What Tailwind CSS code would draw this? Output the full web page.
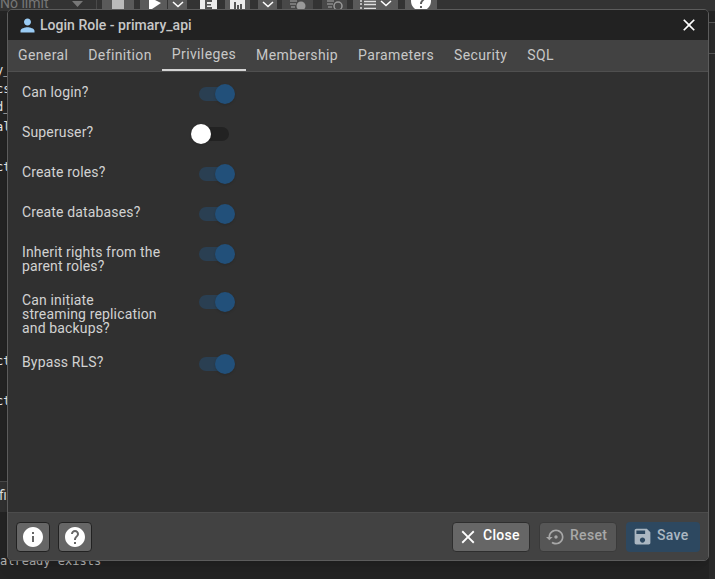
<!DOCTYPE html>
<html>
<head>
<meta charset="utf-8">
<script src="https://cdn.jsdelivr.net/npm/@tailwindcss/browser@4"></script>
<title>Login Role</title>
</head>
<body class="m-0 bg-[#222222]">
<div class="relative w-[715px] h-[579px] overflow-hidden bg-[#232323] font-['Roboto',sans-serif]">
  <!-- background application, dimmed behind the dialog -->
  <div class="flex h-[11px] bg-[#333333] overflow-hidden">
    <div class="w-[97px] flex border-r border-[#4a4a4a]">
      <span class="w-[72px] text-[14px] leading-[10px] -mt-[2px] text-[#777777]">No limit</span>
      <svg class="mt-[1px]" width="11" height="6" viewBox="0 0 11 6"><path d="M0 0H11L5.500 6Z" fill="#777777"/></svg>
    </div>
    <span class="w-[5px]"></span>
    <div class="w-[32px] h-full bg-[#5a5a5a] flex justify-center"><span class="w-[12px] h-full bg-[#bbbbbb]"></span></div>
    <div class="ml-[6px] w-[27px] h-full bg-[#5a5a5a] flex justify-center"><svg width="16" height="11" viewBox="0 0 16 11"><path d="M3 -3L15 3L3 11Z" fill="#ffffff"/></svg></div>
    <div class="ml-px w-[19px] h-full bg-[#5a5a5a] flex justify-center"><svg width="12" height="11" viewBox="0 0 12 11"><path d="M1 2L6 6.500L11 2" fill="none" stroke="#fff" stroke-width="1.500"/></svg></div>
    <div class="ml-[13px] w-[17px] h-full bg-[#ececec] flex justify-center"><svg width="9" height="11" viewBox="0 0 9 11"><path d="M1 0H8V2H3V4H7V5.500H3V7H8V9H1Z" fill="#555"/></svg></div>
    <div class="ml-[8px] w-[25px] h-full bg-[#5a5a5a] flex justify-center"><span class="w-[15px] h-full bg-[#ececec] flex items-end justify-center gap-px pb-[2px]"><i class="w-[2px] h-[7px] bg-[#555]"></i><i class="w-[2px] h-[4px] bg-[#555]"></i><i class="w-[2px] h-[5px] bg-[#555]"></i></span></div>
    <div class="ml-[8px] w-[19px] h-full bg-[#5a5a5a] flex justify-center"><svg width="12" height="11" viewBox="0 0 12 11"><path d="M1 2L6 6.500L11 2" fill="none" stroke="#fff" stroke-width="1.500"/></svg></div>
    <div class="ml-[5px] w-[31px] h-full bg-[#484848] flex justify-center"><svg width="18" height="11" viewBox="0 0 18 11"><circle cx="12" cy="6" r="4.500" fill="#999"/><path d="M1 1H8M1 4H7M2 7H6" stroke="#888" stroke-width="1.500"/></svg></div>
    <div class="ml-[9px] w-[25px] h-full bg-[#484848] flex justify-center"><svg width="18" height="11" viewBox="0 0 18 11"><circle cx="12" cy="6" r="4" fill="none" stroke="#999" stroke-width="1.500"/><path d="M1 1H8M1 4H7M2 7H6" stroke="#888" stroke-width="1.500"/></svg></div>
    <div class="ml-[6px] w-[45px] h-full bg-[#5a5a5a] flex justify-center gap-1"><svg width="16" height="11" viewBox="0 0 16 11"><path d="M0 1H2M0 4H2M0 8H2M4 1.500H16M4 4.500H16M4 8.500H16" stroke="#ddd" stroke-width="1.300"/></svg><svg width="12" height="8" viewBox="0 0 12 8"><path d="M1 1L6 5.500L11 1" fill="none" stroke="#fff" stroke-width="1.500"/></svg></div>
    <div class="ml-[7px] w-[32px] h-full bg-[#5a5a5a] flex justify-center"><svg class="-mt-[11px] shrink-0" width="24" height="24" viewBox="0 0 24 24" fill="#ffffff"><path d="M12 2C6.480 2 2 6.480 2 12s4.480 10 10 10 10-4.480 10-10S17.520 2 12 2zm1 17h-2v-2h2v2zm2.070-7.750l-.9.920C13.450 12.900 13 13.500 13 15h-2v-.5c0-1.100.45-2.100 1.170-2.830l1.240-1.260c.37-.36.59-.86.59-1.410 0-1.100-.9-2-2-2s-2 .9-2 2H8c0-2.210 1.790-4 4-4s4 1.790 4 4c0 .88-.36 1.680-.93 2.250z"/></svg></div>
  </div>

  <div class="flex h-[568px]">
    <!-- left editor column -->
    <div class="w-[8px] bg-[#232323] font-['DejaVu_Sans_Mono',monospace] text-[12px] leading-[20px] text-[#e8e8e8] overflow-hidden pt-[49px] whitespace-nowrap">
      <div class="h-[19px] -ml-[4px]">y_</div>
      <div class="h-[18px] -ml-[4px]">cs</div>
      <div class="h-[20px] -ml-[4px]">d_</div>
      <div class="h-[40px] -ml-[4px]">al</div>
      <div class="h-[194px] -ml-[4px]">ct</div>
      <div class="h-[40px] -ml-[4px]">ct</div>
      <div class="h-[90px] -ml-[4px]">ct</div>
      <div class="h-[31px] bg-[#303030] border-t border-[#4a4a4a] pt-[3px] font-['Roboto',sans-serif] text-[14px] text-[#dddddd]"><span class="-ml-[1px] block">fi</span></div>
    </div>
    <div class="flex-1"></div>
    <div class="w-[6px] flex flex-col">
      <div class="h-[11px]"></div>
      <div class="h-px bg-[#555555]"></div>
      <div class="h-[30px] bg-[#2a2a2a]"></div>
      <div class="h-px bg-[#555555]"></div>
      <div class="flex-1 bg-[#2a2a2a]"></div>
    </div>
  </div>
  <div class="absolute left-0 top-[554px] font-['DejaVu_Sans_Mono',monospace] text-[12px] leading-[14px] text-[#b4b4b4]">already exists</div>

  <!-- dialog -->
  <div class="absolute left-[7px] top-[9px] w-[702px] h-[552px] flex flex-col overflow-hidden rounded-[5px] border border-[#5c5c5c] bg-[#303030] shadow-lg text-[14px]">
    <div class="h-[30px] shrink-0 bg-[#222222] flex items-center pl-[9px] pr-[9px] text-[#c8c8c8]">
      <svg width="21" height="21" viewBox="0 0 24 24" fill="#9accf5"><path d="M12 12c2.210 0 4-1.790 4-4s-1.790-4-4-4-4 1.790-4 4 1.790 4 4 4zm0 2c-2.670 0-8 1.340-8 4v2h16v-2c0-2.660-5.330-4-8-4z"/></svg>
      <span class="ml-[2px] font-medium leading-none tracking-[0.02px]">Login Role - primary_api</span>
      <svg class="ml-auto" width="20" height="20" viewBox="0 0 24 24" fill="#ffffff"><path d="M19 6.410L17.590 5 12 10.590 6.410 5 5 6.410 10.590 12 5 17.590 6.410 19 12 13.410 17.590 19 19 17.590 13.410 12z"/></svg>
    </div>
    <div class="h-[32px] shrink-0 bg-[#424242] border-b border-[#4f4f4f] flex text-[#c8c8c8] tracking-[0.38px]">
      <div class="px-[10px] h-[31px] flex items-center">General</div>
      <div class="px-[10px] h-[31px] flex items-center">Definition</div>
      <div class="px-[10px] h-[31px] flex items-center border-b-2 border-[#d4d4d4]">Privileges</div>
      <div class="px-[10px] h-[31px] flex items-center">Membership</div>
      <div class="px-[10px] h-[31px] flex items-center">Parameters</div>
      <div class="px-[10px] h-[31px] flex items-center">Security</div>
      <div class="px-[10px] h-[31px] flex items-center">SQL</div>
    </div>
    <div class="flex-1 flex flex-col gap-[20px] pl-[14px] pt-[13px] text-[#d2d2d2] leading-[14px] tracking-[0.15px]">
      <div class="flex min-h-[20px]">
        <div class="w-[177px]">Can login?</div>
        <div class="relative w-[30px] h-[14px] mt-[2px] rounded-full bg-[#2a3f52]"><span class="absolute right-[-6px] top-[-3px] w-[20px] h-[20px] rounded-full bg-[#22507a] shadow"></span></div>
      </div>
      <div class="flex min-h-[20px]">
        <div class="w-[177px]">Superuser?</div>
        <div class="relative w-[30px] h-[14px] mt-[2px] rounded-full bg-[#222222]"><span class="absolute left-[-8px] top-[-3px] w-[20px] h-[20px] rounded-full bg-white shadow"></span></div>
      </div>
      <div class="flex min-h-[20px]">
        <div class="w-[177px]">Create roles?</div>
        <div class="relative w-[30px] h-[14px] mt-[2px] rounded-full bg-[#2a3f52]"><span class="absolute right-[-6px] top-[-3px] w-[20px] h-[20px] rounded-full bg-[#22507a] shadow"></span></div>
      </div>
      <div class="flex min-h-[20px]">
        <div class="w-[177px]">Create databases?</div>
        <div class="relative w-[30px] h-[14px] mt-[2px] rounded-full bg-[#2a3f52]"><span class="absolute right-[-6px] top-[-3px] w-[20px] h-[20px] rounded-full bg-[#22507a] shadow"></span></div>
      </div>
      <div class="flex min-h-[20px]">
        <div class="w-[177px]">Inherit rights from the<br>parent roles?</div>
        <div class="relative w-[30px] h-[14px] mt-[2px] rounded-full bg-[#2a3f52]"><span class="absolute right-[-6px] top-[-3px] w-[20px] h-[20px] rounded-full bg-[#22507a] shadow"></span></div>
      </div>
      <div class="flex min-h-[20px]">
        <div class="w-[177px]">Can initiate<br>streaming replication<br>and backups?</div>
        <div class="relative w-[30px] h-[14px] mt-[2px] rounded-full bg-[#2a3f52]"><span class="absolute right-[-6px] top-[-3px] w-[20px] h-[20px] rounded-full bg-[#22507a] shadow"></span></div>
      </div>
      <div class="flex min-h-[20px]">
        <div class="w-[177px]">Bypass RLS?</div>
        <div class="relative w-[30px] h-[14px] mt-[2px] rounded-full bg-[#2a3f52]"><span class="absolute right-[-6px] top-[-3px] w-[20px] h-[20px] rounded-full bg-[#22507a] shadow"></span></div>
      </div>
    </div>
    <div class="h-[48px] shrink-0 bg-[#424242] border-t border-[#4c4c4c] flex items-center pl-[8px] pr-[8px] font-medium tracking-[0.3px]">
      <div class="w-[34px] h-[30px] flex items-center justify-center rounded-[4px] bg-[#666666] border border-[#222222]">
        <svg width="24" height="24" viewBox="0 0 24 24" fill="#ffffff"><path d="M12 2C6.480 2 2 6.480 2 12s4.480 10 10 10 10-4.480 10-10S17.520 2 12 2zm1 15h-2v-6h2v6zm0-8h-2V7h2v2z"/></svg>
      </div>
      <div class="ml-[8px] w-[34px] h-[30px] flex items-center justify-center rounded-[4px] bg-[#666666] border border-[#222222]">
        <svg width="24" height="24" viewBox="0 0 24 24" fill="#ffffff"><path d="M12 2C6.480 2 2 6.480 2 12s4.480 10 10 10 10-4.480 10-10S17.520 2 12 2zm1 17h-2v-2h2v2zm2.070-7.750l-.9.920C13.450 12.900 13 13.500 13 15h-2v-.5c0-1.100.45-2.100 1.170-2.830l1.240-1.260c.37-.36.59-.86.59-1.410 0-1.100-.9-2-2-2s-2 .9-2 2H8c0-2.210 1.790-4 4-4s4 1.790 4 4c0 .88-.36 1.680-.93 2.250z"/></svg>
      </div>
      <div class="ml-auto w-[78px] h-[30px] flex items-center pl-[4px] gap-[4px] rounded-[4px] bg-[#666666] border border-[#2e2e2e] text-white">
        <svg width="22" height="22" viewBox="0 0 24 24" fill="#ffffff"><path d="M19 6.410L17.590 5 12 10.590 6.410 5 5 6.410 10.590 12 5 17.590 6.410 19 12 13.410 17.590 19 19 17.590 13.410 12z"/></svg>
        <span class="-mt-[2px]">Close</span>
      </div>
      <div class="ml-[9px] w-[78px] h-[30px] flex items-center pl-[6px] gap-[4px] rounded-[4px] bg-[#565656] border border-[#3a3a3a] text-[#a8a8a8]">
        <svg width="20" height="20" viewBox="0 0 24 24" fill="#a8a8a8"><path d="M14 12c0-1.100-.9-2-2-2s-2 .9-2 2 .9 2 2 2 2-.9 2-2zm-2-9c-4.970 0-9 4.030-9 9H0l4 4 4-4H5c0-3.870 3.130-7 7-7s7 3.130 7 7-3.130 7-7 7c-1.510 0-2.910-.49-4.060-1.300l-1.420 1.440C8.040 20.300 9.940 21 12 21c4.970 0 9-4.030 9-9s-4.030-9-9-9z"/></svg>
        <span class="-mt-[2px]">Reset</span>
      </div>
      <div class="ml-[9px] w-[74px] h-[30px] flex items-center pl-[6px] gap-[4px] rounded-[4px] bg-[#2d4860] text-[#abb7c2]">
        <svg width="21" height="21" viewBox="0 0 24 24" fill="#abb7c2"><path d="M17 3H5c-1.110 0-2 .9-2 2v14c0 1.100.89 2 2 2h14c1.100 0 2-.9 2-2V7l-4-4zm-5 16c-1.660 0-3-1.340-3-3s1.340-3 3-3 3 1.340 3 3-1.340 3-3 3zm3-10H5V5h10v4z"/></svg>
        <span class="-mt-[2px]">Save</span>
      </div>
    </div>
  </div>
</div>
</body>
</html>
